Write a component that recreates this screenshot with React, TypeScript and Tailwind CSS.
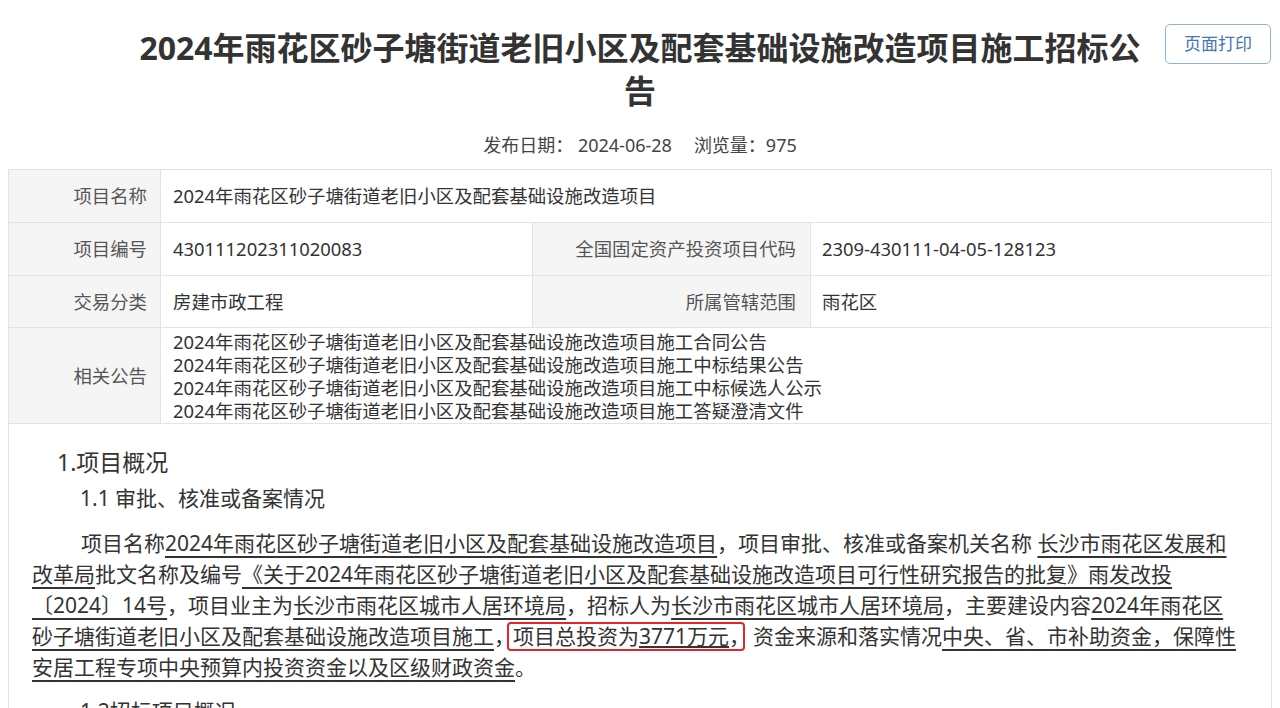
import React from 'react';

const font = "font-['Noto_Sans','Noto_Sans_CJK_SC',sans-serif]";

const related = [
  '2024年雨花区砂子塘街道老旧小区及配套基础设施改造项目施工合同公告',
  '2024年雨花区砂子塘街道老旧小区及配套基础设施改造项目施工中标结果公告',
  '2024年雨花区砂子塘街道老旧小区及配套基础设施改造项目施工中标候选人公示',
  '2024年雨花区砂子塘街道老旧小区及配套基础设施改造项目施工答疑澄清文件',
];

function Label({ children, className = '' }: { children: React.ReactNode; className?: string }) {
  return (
    <div className={`flex items-center justify-end bg-[#f5f5f5] border-r border-b border-[#e3e3e3] text-[#555] ${className}`}>
      {children}
    </div>
  );
}

function Value({ children, className = '' }: { children: React.ReactNode; className?: string }) {
  return (
    <div className={`flex items-center border-r border-b border-[#e3e3e3] text-[#333] ${className}`}>
      {children}
    </div>
  );
}

export default function App() {
  return (
    <div className={`relative h-[708px] overflow-hidden bg-white ${font}`}>
      {/* 标题 */}
      <div className="pt-[26px]">
        <h1 className="mx-auto w-[1010px] text-center text-[32px] font-bold leading-[43px] text-[#333]">
          2024年雨花区砂子塘街道老旧小区及配套基础设施改造项目施工招标公告
        </h1>
      </div>
      <button className="absolute right-[9px] top-[24px] flex h-[40px] w-[106px] items-center justify-center rounded-[5px] border border-[#8db3da] text-[17px] text-[#4676b3]">
        页面打印
      </button>

      <div className="mt-[21px] flex justify-center text-[18px] leading-[24px] text-[#444]">
        <span>发布日期： 2024-06-28</span>
        <span className="ml-[22px]">浏览量：975</span>
      </div>

      {/* 信息表 */}
      <div className="mt-[12px] px-[8px]">
        <div className="grid grid-cols-[152px_372px_278px_1fr] border-t border-l border-[#e3e3e3] text-[18.4px]">
          <Label className="h-[53px] pr-[13px]">项目名称</Label>
          <Value className="col-span-3 h-[53px] pl-[12px]">2024年雨花区砂子塘街道老旧小区及配套基础设施改造项目</Value>

          <Label className="h-[53px] pr-[13px]">项目编号</Label>
          <Value className="h-[53px] pl-[12px]">430111202311020083</Value>
          <Label className="h-[53px] pr-[14px]">全国固定资产投资项目代码</Label>
          <Value className="h-[53px] pl-[11px]">2309-430111-04-05-128123</Value>

          <Label className="h-[52px] pr-[13px]">交易分类</Label>
          <Value className="h-[52px] pl-[12px]">房建市政工程</Value>
          <Label className="h-[52px] pr-[14px]">所属管辖范围</Label>
          <Value className="h-[52px] pl-[11px]">雨花区</Value>

          <Label className="h-[96px] pr-[13px]">相关公告</Label>
          <Value className="col-span-3 h-[96px] pl-[12px]">
            <div className="flex flex-col leading-[23px]">
              {related.map((r) => (
                <span key={r}>{r}</span>
              ))}
            </div>
          </Value>
        </div>

        {/* 正文 */}
        <div className="border-x border-[#e3e3e3] pl-[23px] pr-[27px] pt-[20px] text-[#333]">
          <h2 className="pl-[25px] text-[23px] leading-[36px]">1.项目概况</h2>
          <h3 className="pl-[48px] text-[21px] leading-[36px]">1.1 审批、核准或备案情况</h3>
          <p className="mt-[12px] indent-[49px] text-[21px] leading-[31px]">
            项目名称<u className="underline-offset-[5px]">2024年雨花区砂子塘街道老旧小区及配套基础设施改造项目</u>，项目审批、核准或备案机关名称{' '}
            <u className="underline-offset-[5px]">长沙市雨花区发展和改革局</u>批文名称及编号
            <u className="underline-offset-[5px]">《关于2024年雨花区砂子塘街道老旧小区及配套基础设施改造项目可行性研究报告的批复》雨发改投〔2024〕14号</u>
            ，项目业主为<u className="underline-offset-[5px]">长沙市雨花区城市人居环境局</u>，招标人为
            <u className="underline-offset-[5px]">长沙市雨花区城市人居环境局</u>，主要建设内容
            <u className="underline-offset-[5px]">2024年雨花区砂子塘街道老旧小区及配套基础设施改造项目施工</u>，
            <span className="-ml-[8px] inline-block whitespace-nowrap rounded-[4px] border-2 border-[#e3262b] pl-[4px] pr-[3px] indent-0 leading-[25px]">
              项目总投资为<u className="underline underline-offset-[2px]">3771万元</u>
              <span className="-mr-[10px]">，</span>
            </span>
            <span className="ml-[8px]">资金来源和落实情况</span>
            <u className="underline-offset-[5px]">中央、省、市补助资金，保障性安居工程专项中央预算内投资资金以及区级财政资金</u>。
          </p>
          <h3 className="mt-[13px] pl-[48px] text-[21px] leading-[31px]">1.2招标项目概况</h3>
          <p className="mt-[12px] indent-[49px] text-[21px] leading-[31px]">
            本招标项目为2024年雨花区砂子塘街道老旧小区及配套基础设施改造项目施工。
          </p>
        </div>
      </div>
    </div>
  );
}
